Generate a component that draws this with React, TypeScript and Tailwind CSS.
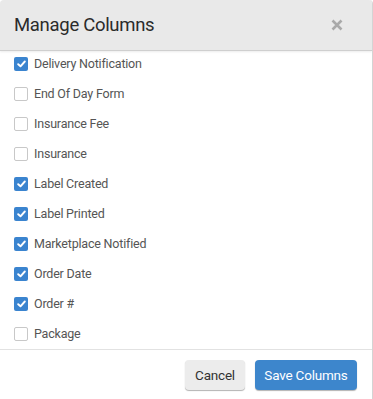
import React, { useState } from "react";

const columns = [
  { name: "Delivery Notification", on: true },
  { name: "End Of Day Form", on: false },
  { name: "Insurance Fee", on: false },
  { name: "Insurance", on: false },
  { name: "Label Created", on: true },
  { name: "Label Printed", on: true },
  { name: "Marketplace Notified", on: true },
  { name: "Order Date", on: true },
  { name: "Order #", on: true },
  { name: "Package", on: false },
];

const Check: React.FC<{ on: boolean }> = ({ on }) =>
  on ? (
    <span className="flex h-[14px] w-[14px] items-center justify-center rounded-[2px] bg-[#3a84cf]">
      <svg width="9" height="8" viewBox="0 0 9 8">
        <path d="M1.2 4.2 L3.5 6.3 L7.8 1.5" stroke="#fff" strokeWidth="1.9" fill="none" strokeLinecap="round" strokeLinejoin="round" />
      </svg>
    </span>
  ) : (
    <span className="h-[14px] w-[14px] rounded-[2px] border border-[#c8c8c8] bg-white" />
  );

export default function App() {
  const [items, setItems] = useState(columns);

  const toggle = (i: number) =>
    setItems((prev) => prev.map((c, j) => (j === i ? { ...c, on: !c.on } : c)));

  return (
    <div className="h-[399px] w-[373px] bg-white font-['Roboto',sans-serif]">
      <div className="flex h-full flex-col overflow-hidden rounded-t-[4px] border-r border-[#d4d4d4]">
        {/* header */}
        <div className="flex h-[51px] shrink-0 items-center justify-between border-b border-[#cfcfcf] bg-[#e9e9e9] pl-[14px] pr-[29px] shadow-[0_1px_2px_rgba(0,0,0,0.08)]">
          <h2 className="pt-[1px] text-[18.5px] tracking-[-0.3px] text-[#2b2b2b]">Manage Columns</h2>
          <svg width="12" height="12" viewBox="0 0 12 12">
            <path d="M1.5 1.5 L10.5 10.5 M10.5 1.5 L1.5 10.5" stroke="#a9a9a9" strokeWidth="2.6" />
          </svg>
        </div>

        {/* list */}
        <div className="flex flex-col">
          {items.map((c, i) => (
            <label
              key={c.name}
              onClick={() => toggle(i)}
              className="flex h-[30px] cursor-pointer items-center gap-[6px] pl-[14px] text-[12.5px] tracking-[-0.2px] text-[#555]"
              style={i === 0 ? { marginTop: -2 } : undefined}
            >
              <Check on={c.on} />
              <span>{c.name}</span>
            </label>
          ))}
        </div>

        {/* footer */}
        <div className="mt-auto flex h-[50px] items-start justify-end gap-[10px] border-t border-[#e2e2e2] pr-[15px] pt-[10px]">
          <button className="h-[30px] w-[60px] rounded-[4px] bg-[#ececec] text-[13.5px] tracking-[-0.2px] text-[#333] shadow-[0_1px_1px_rgba(0,0,0,0.3)]">
            Cancel
          </button>
          <button className="h-[30px] w-[102px] rounded-[4px] bg-[#3d86cc] text-[13.5px] tracking-[-0.2px] text-white shadow-[0_1px_1px_rgba(0,0,0,0.3)]">
            Save Columns
          </button>
        </div>
      </div>
    </div>
  );
}
